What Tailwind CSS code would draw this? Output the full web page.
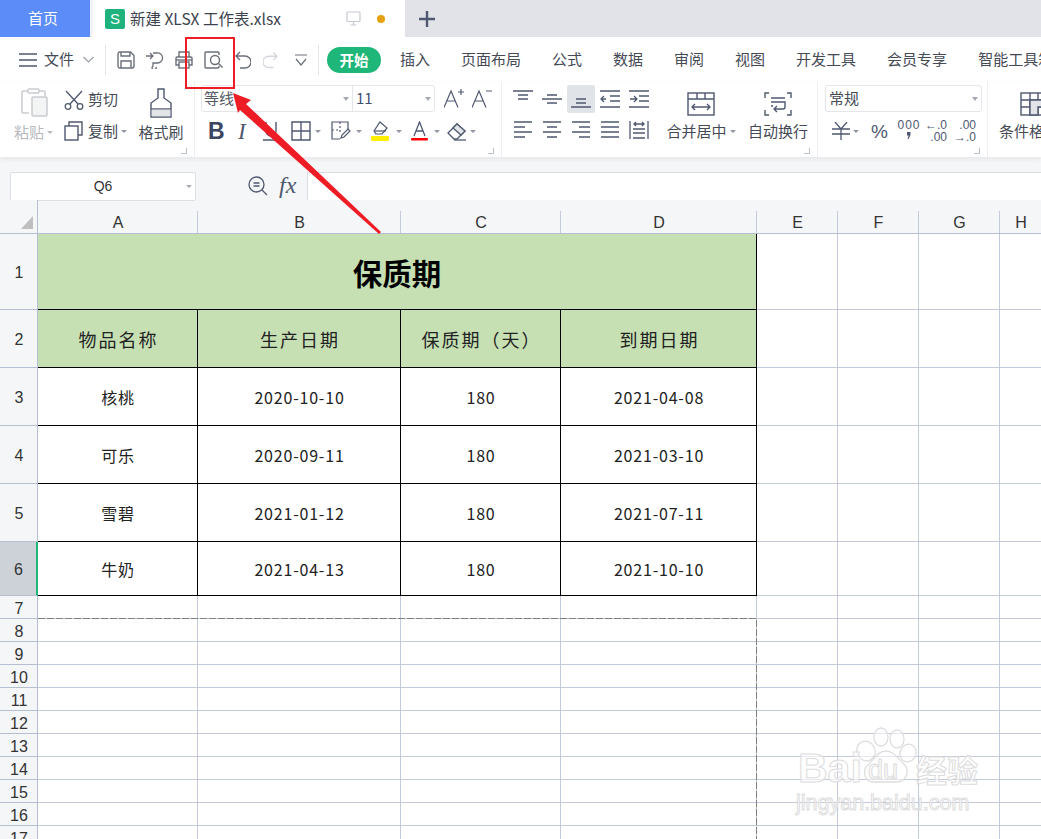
<!DOCTYPE html>
<html lang="zh-CN">
<head>
  <meta charset="UTF-8">
  <title>新建 XLSX 工作表.xlsx</title>
  <script src="https://cdn.jsdelivr.net/npm/@tailwindcss/browser@4"></script>
</head>
<body class="relative w-[1041px] h-[839px] overflow-hidden bg-white font-['Noto_Sans_CJK_SC','Liberation_Sans',sans-serif] text-[#454a55]">

  <!-- tabs -->
  <div class="flex h-[37px] bg-[#e1e3e8]">
    <div class="w-[90px] flex items-center justify-center bg-[#5b8cf8] text-white text-[15px] pr-[4px]">首页</div>
    <div class="w-[3px] bg-[#f1f3f6]"></div>
    <div class="w-[312px] flex items-center bg-white pl-[12px]">
      <div class="w-[20px] h-[20px] rounded-[2px] bg-[#20b27c] text-white text-[15px] leading-[20px] text-center font-['Liberation_Sans']">S</div>
      <span class="ml-[5px] w-[216px] text-[15.500px] text-[#3d424d] whitespace-nowrap">新建 XLSX 工作表.xlsx</span>
      <svg class="w-[15px] h-[15px]" viewBox="0 0 15 15" fill="none" stroke="#c5c9d3" stroke-width="1.2"><rect x="1" y="1" width="13" height="9.5" rx="1"/><path d="M7.5 10.5v3M4.5 14h6"/></svg>
      <div class="ml-[16px] w-[8px] h-[8px] rounded-full bg-[#e8a013]"></div>
    </div>
    <svg class="ml-[14px] mt-[11px] w-[16px] h-[16px]" viewBox="0 0 16 16" stroke="#4f5870" stroke-width="2.4"><path d="M8 0v16M0 8h16"/></svg>
  </div>

  <!-- quick access + menu -->
  <div class="flex items-center h-[45px] pl-[19px] text-[15px] whitespace-nowrap [&>*]:shrink-0">
    <svg class="w-[18px] h-[14px]" viewBox="0 0 18 14" stroke="#4f5870" stroke-width="1.4"><path d="M0 1h18M0 7h18M0 13h18"/></svg>
    <span class="ml-[7px] w-[31px]">文件</span>
    <svg class="ml-[8px] w-[11px] h-[7px]" viewBox="0 0 11 7" fill="none" stroke="#9aa0ad" stroke-width="1.2"><path d="M.5 1l5 5 5-5"/></svg>
    <div class="ml-[11px] w-px h-[30px] bg-[#e2e4e9]"></div>
    <svg class="ml-[11px] w-[18px] h-[18px]" viewBox="0 0 18 18" fill="none" stroke="#6a6f7a" stroke-width="1.4"><path d="M2.5 1h11l3.500 3.500v10.500a2 2 0 0 1-2 2h-12a2 2 0 0 1-2-2v-12a2 2 0 0 1 1.500-2z"/><path d="M4 1v4h9V1M4 17v-7h10v7"/></svg>
    <svg class="ml-[11px] w-[18px] h-[18px]" viewBox="0 0 18 18" fill="none" stroke="#6a6f7a" stroke-width="1.300"><path d="M0 5h7M4 2l3 3-3 3M7 2h4a5 5 0 0 1 1 10H7v3a2 2 0 1 0 3 1"/></svg>
    <svg class="ml-[11px] w-[18px] h-[18px]" viewBox="0 0 18 18" fill="none" stroke="#6a6f7a" stroke-width="1.400"><path d="M4 6V1h10v5M4 14H1V7a1 1 0 0 1 1-1h14a1 1 0 0 1 1 1v7h-3"/><rect x="4" y="11" width="10" height="6"/><path d="M1 9h16"/></svg>
    <svg class="ml-[11px] w-[19px] h-[18px]" viewBox="0 0 19 18" fill="none" stroke="#6a6f7a" stroke-width="1.400"><path d="M15 4V2a1 1 0 0 0-1-1H2a1 1 0 0 0-1 1v14a1 1 0 0 0 1 1h12a1 1 0 0 0 1-1v-1"/><circle cx="11" cy="9" r="4.500"/><path d="M14.500 12.500l4 4"/></svg>
    <svg class="ml-[12px] w-[16px] h-[18px]" viewBox="0 0 16 18" fill="none" stroke="#6a6f7a" stroke-width="1.400"><path d="M5 1L1 5l4 4M1 5h9a5 5 0 0 1 0 12H5"/></svg>
    <svg class="ml-[12px] w-[15px] h-[18px]" viewBox="0 0 16 18" fill="none" stroke="#d3d6dc" stroke-width="1.400"><path d="M11 1l4 4-4 4M15 5H6a5 5 0 0 0 0 12h5"/></svg>
    <svg class="ml-[17px] w-[12px] h-[12px]" viewBox="0 0 12 12" fill="none" stroke="#6a6f7a" stroke-width="1.200"><path d="M0 1h12M1 5l5 6 5-6"/></svg>
    <div class="ml-[11px] w-px h-[30px] bg-[#e2e4e9]"></div>
    <div class="ml-[8px] w-[54px] h-[26px] rounded-full bg-[#1fb67a] text-white text-[14.500px] font-bold leading-[26px] text-center">开始</div>
    <div class="ml-[19px] flex gap-[31px] text-[#454a55]">
      <span>插入</span><span>页面布局</span><span>公式</span><span>数据</span><span>审阅</span><span>视图</span><span>开发工具</span><span>会员专享</span><span>智能工具箱</span>
    </div>
  </div>

  <!-- ribbon -->
  <div class="relative z-10 flex h-[75px] bg-white shadow-[0_2px_5px_rgba(0,0,0,0.07)] text-[15px] whitespace-nowrap overflow-hidden">

    <!-- clipboard -->
    <div class="relative flex shrink-0 w-[195px] pl-[14px] border-r border-[#eceef1] my-0">
      <div class="w-[50px] pt-[6px] flex flex-col items-start">
        <svg class="ml-[7px] w-[27px] h-[29px]" viewBox="0 0 27 29" fill="none" stroke="#c9cbcf" stroke-width="1.500"><path d="M7 3H2a1 1 0 0 0-1 1v20a1 1 0 0 0 1 1h6M18 3h5a1 1 0 0 1 1 1v4"/><rect x="7" y="1" width="11" height="4" rx="1"/><rect x="11" y="9" width="15" height="19" rx="1" fill="#f3f4f4"/></svg>
        <div class="mt-[3px] h-[24px] flex items-center text-[#b7b9bd]">粘贴<span class="ml-[3px] border-x-[3px] border-t-[3px] border-x-transparent border-t-[#b7b9bd]"></span></div>
      </div>
      <div class="w-[74px] flex flex-col text-[#454a55]">
        <div class="h-[29px] mt-[3px] flex items-center">
          <svg class="w-[20px] h-[20px]" viewBox="0 0 20 20" fill="none" stroke="#4f5870" stroke-width="1.300"><path d="M2 1l12 13M18 1L6 14"/><circle cx="4" cy="16.500" r="2.800"/><circle cx="16" cy="16.500" r="2.800"/></svg>
          <span class="ml-[4px]">剪切</span>
        </div>
        <div class="h-[34px] flex items-center">
          <svg class="w-[19px] h-[20px]" viewBox="0 0 19 20" fill="none" stroke="#4f5870" stroke-width="1.400"><path d="M5 5V1h13v13h-4"/><rect x="1" y="5" width="13" height="14"/></svg>
          <span class="ml-[5px]">复制</span>
          <span class="ml-[3px] border-x-[3px] border-t-[3px] border-x-transparent border-t-[#8f95a2]"></span>
        </div>
      </div>
      <div class="w-[46px] pt-[6px] flex flex-col items-center">
        <svg class="w-[24px] h-[30px]" viewBox="0 0 24 30" fill="none" stroke="#4f5870" stroke-width="1.400"><path d="M9 1h6v9l7 5v14H2V15l7-5z"/><path d="M2 21h20"/><path d="M2.700 21.700h18.600v6.600H2.700z" fill="#e2e4e8" stroke="none"/></svg>
        <div class="mt-[2px] h-[24px] leading-[24px]">格式刷</div>
      </div>
      <svg class="absolute right-[7px] bottom-[3px] w-[6px] h-[6px]" viewBox="0 0 6 6" fill="none" stroke="#b9bec8"><path d="M0 5.500h5.500V0"/></svg>
    </div>

    <!-- font -->
    <div class="relative shrink-0 w-[307px] pl-[6px] border-r border-[#eceef1]">
      <div class="flex items-start mt-[3px] h-[29px]">
        <div class="flex w-[234px] h-[27px] border border-[#e4e6ea] rounded-[3px]">
          <div class="w-[151px] flex items-center justify-between pl-[2px] pr-[3px] border-r border-[#e4e6ea] text-[#555a66]">等线<span class="border-x-[3px] border-t-[4px] border-x-transparent border-t-[#a3a8b3]"></span></div>
          <div class="flex-1 flex items-center justify-between pl-[3px] pr-[3px] text-[15px] text-[#3f5170]">11<span class="border-x-[3px] border-t-[4px] border-x-transparent border-t-[#a3a8b3]"></span></div>
        </div>
        <svg class="ml-[9px] mt-[3px] w-[20px] h-[20px]" viewBox="0 0 20 20" fill="none" stroke="#4f5870" stroke-width="1.200"><path d="M0 19.500L7 3l7 16.500M3 13h8M14 4h6M17 1v6"/></svg>
        <svg class="ml-[8px] mt-[3px] w-[20px] h-[20px]" viewBox="0 0 20 20" fill="none" stroke="#4f5870" stroke-width="1.200"><path d="M0 19.500L7 3l7 16.500M3 13h8M14 3h6"/></svg>
      </div>
      <div class="flex items-center h-[34px] [&>*]:shrink-0">
        <span class="ml-[7px] w-[16px] text-[23px] font-bold font-['Liberation_Sans'] text-[#3b4660] leading-none">B</span>
        <span class="ml-[14px] w-[10px] text-[23px] italic font-['Liberation_Serif'] text-[#4f5870] leading-none">I</span>
        <svg class="ml-[14px] w-[18px] h-[20px]" viewBox="0 0 18 20" fill="none" stroke="#4f5870" stroke-width="1.400"><path d="M4 1v9a5 5 0 0 0 10 0V1M1 19h16"/></svg>
        <svg class="ml-[11px] w-[20px] h-[20px]" viewBox="0 0 20 20" fill="none" stroke="#4f5870" stroke-width="1.400"><path d="M1 1h18v18H1zM10 1v18M1 10h18"/></svg>
        <span class="ml-[4px] border-x-[3px] border-t-[3px] border-x-transparent border-t-[#8f95a2]"></span>
        <svg class="ml-[10px] w-[20px] h-[20px]" viewBox="0 0 20 20" fill="none" stroke="#4f5870" stroke-width="1.200"><path d="M9 18H1V1h16v7" /><path d="M9 1v12M1 9h8" stroke-dasharray="2 2"/><path d="M10 17l1-3 6-6 2 2-6 6z"/></svg>
        <span class="ml-[5px] border-x-[3px] border-t-[3px] border-x-transparent border-t-[#8f95a2]"></span>
        <svg class="ml-[9px] w-[19px] h-[20px]" viewBox="0 0 19 20" fill="none" stroke="#4f5870" stroke-width="1.200"><path d="M9 1l7 6-5 6H5L3 10z"/><path d="M3 10h12" /><rect x="0" y="15" width="18" height="5" rx="1" fill="#ffee00" stroke="none"/></svg>
        <span class="ml-[6px] border-x-[3px] border-t-[3px] border-x-transparent border-t-[#8f95a2]"></span>
        <svg class="ml-[9px] w-[17px] h-[20px]" viewBox="0 0 17 20" fill="none" stroke="#4f5870" stroke-width="1.300"><path d="M3 15L8.500 1 14 15M5 10h7"/><rect x="0" y="17" width="17" height="2.500" rx="1" fill="#f00" stroke="none"/></svg>
        <span class="ml-[6px] border-x-[3px] border-t-[3px] border-x-transparent border-t-[#8f95a2]"></span>
        <svg class="ml-[7px] w-[20px] h-[19px]" viewBox="0 0 20 19" fill="none" stroke="#4f5870" stroke-width="1.300"><path d="M1 11l9-9 8 7-8 8H7z"/><path d="M10 2l8 7-4 4-8-7z" fill="#e2e4e8"/><path d="M7 18h12"/></svg>
        <span class="ml-[3px] border-x-[3px] border-t-[3px] border-x-transparent border-t-[#8f95a2]"></span>
      </div>
      <svg class="absolute right-[7px] bottom-[3px] w-[6px] h-[6px]" viewBox="0 0 6 6" fill="none" stroke="#b9bec8"><path d="M0 5.500h5.500V0"/></svg>
    </div>

    <!-- alignment -->
    <div class="relative flex shrink-0 w-[316px] pl-[6px] border-r border-[#eceef1]">
      <div class="w-[145px] mt-[3px] grid grid-cols-[repeat(5,29px)] grid-rows-[28px_34px] items-center justify-items-center">
        <svg class="w-[20px] h-[18px]" viewBox="0 0 20 18" stroke="#4f5870" stroke-width="1.400"><path d="M0 1h20M5 5h10M5 9h10"/></svg>
        <svg class="w-[20px] h-[18px]" viewBox="0 0 20 18" stroke="#4f5870" stroke-width="1.400"><path d="M5 5h10M0 9h20M5 13h10"/></svg>
        <div class="w-[28px] h-[28px] bg-[#e0e3e8] rounded-[2px] flex items-center justify-center"><svg class="w-[20px] h-[18px]" viewBox="0 0 20 18" stroke="#4f5870" stroke-width="1.400"><path d="M5 9h10M5 13h10M0 17h20"/></svg></div>
        <svg class="w-[20px] h-[18px]" viewBox="0 0 20 18" fill="none" stroke="#4f5870" stroke-width="1.300"><path d="M0 1h20M10 6h10M10 11h10M0 17h20M6 9H1M4 6L1 9l3 3"/></svg>
        <svg class="w-[20px] h-[18px]" viewBox="0 0 20 18" fill="none" stroke="#4f5870" stroke-width="1.300"><path d="M0 1h20M10 6h10M10 11h10M0 17h20M1 9h6M5 6l3 3-3 3"/></svg>
        <svg class="w-[18px] h-[18px]" viewBox="0 0 18 18" stroke="#4f5870" stroke-width="1.400"><path d="M0 1h18M0 6h11M0 11h18M0 16h11"/></svg>
        <svg class="w-[18px] h-[18px]" viewBox="0 0 18 18" stroke="#4f5870" stroke-width="1.400"><path d="M0 1h18M4 6h10M0 11h18M4 16h10"/></svg>
        <svg class="w-[18px] h-[18px]" viewBox="0 0 18 18" stroke="#4f5870" stroke-width="1.400"><path d="M0 1h18M7 6h11M0 11h18M7 16h11"/></svg>
        <svg class="w-[18px] h-[18px]" viewBox="0 0 18 18" stroke="#4f5870" stroke-width="1.400"><path d="M0 1h18M0 6h18M0 11h18M0 16h18"/></svg>
        <svg class="w-[20px] h-[18px]" viewBox="0 0 20 18" fill="none" stroke="#4f5870" stroke-width="1.300"><path d="M1 0v18M19 0v18M4 8h12M4 17h12M4 12h12M5 3h10M7 1L5 3l2 2M13 1l2 2-2 2"/></svg>
      </div>
      <div class="ml-[12px] w-[72px] pt-[10px] flex flex-col items-center">
        <svg class="w-[28px] h-[24px]" viewBox="0 0 28 24" fill="none" stroke="#4f5870" stroke-width="1.400"><rect x="1" y="1" width="26" height="22"/><path d="M1 7h26M10 1v6M18 1v6M5 15h18M8 12l-3 3 3 3M20 12l3 3-3 3"/></svg>
        <div class="mt-[3px] flex items-center h-[24px]">合并居中<span class="ml-[3px] border-x-[3px] border-t-[3px] border-x-transparent border-t-[#8f95a2]"></span></div>
      </div>
      <div class="ml-[11px] w-[60px] pt-[10px] flex flex-col items-center">
        <svg class="w-[28px] h-[24px]" viewBox="0 0 28 24" fill="none" stroke="#4f5870" stroke-width="1.400"><path d="M5 1H1v5M23 1h4v5M5 23H1v-5M23 23h4v-5M7 6h14M7 10h14v5a2 2 0 0 1-2 2h-8M13 14l-3 3 3 3M7 14h2"/></svg>
        <div class="mt-[3px] h-[24px] leading-[24px]">自动换行</div>
      </div>
      <svg class="absolute right-[7px] bottom-[3px] w-[6px] h-[6px]" viewBox="0 0 6 6" fill="none" stroke="#b9bec8"><path d="M0 5.500h5.500V0"/></svg>
    </div>

    <!-- number -->
    <div class="relative shrink-0 w-[170px] pl-[7px] border-r border-[#eceef1]">
      <div class="mt-[3px] h-[29px]">
        <div class="w-[157px] h-[27px] flex items-center justify-between pl-[3px] pr-[3px] border border-[#e4e6ea] rounded-[3px] text-[#454a55]">常规<span class="border-x-[3px] border-t-[4px] border-x-transparent border-t-[#a3a8b3]"></span></div>
      </div>
      <div class="flex items-center h-[34px] text-[#4f5870] [&>*]:shrink-0">
        <svg class="ml-[6px] w-[20px] h-[18px]" viewBox="0 0 20 18" fill="none" stroke="#4f5870" stroke-width="1.300"><path d="M4 0l6 7 6-7M10 7v11M1 7h18M1 12h18"/></svg>
        <span class="ml-[2px] border-x-[3px] border-t-[3px] border-x-transparent border-t-[#8f95a2]"></span>
        <span class="ml-[12px] w-[17px] text-[19px] font-['Liberation_Sans'] leading-none">%</span>
        <span class="ml-[10px] w-[22px] h-[24px] flex flex-col items-center text-[12px] font-['Liberation_Sans'] leading-[12px] tracking-[1px]"><span>000</span><svg class="mt-[1px] w-[4px] h-[7px]" viewBox="0 0 4 7" fill="#4f5870"><path d="M0 0h3.500v3L1.500 7H.500l1-3.500H0z"/></svg></span>
        <span class="ml-[5px] w-[22px] flex flex-col items-end text-[12px] font-['Liberation_Sans'] leading-[12px]"><span>←.0</span><span>.00</span></span>
        <span class="ml-[7px] w-[22px] flex flex-col items-end text-[12px] font-['Liberation_Sans'] leading-[12px]"><span>.00</span><span>→.0</span></span>
      </div>
      <svg class="absolute right-[7px] bottom-[3px] w-[6px] h-[6px]" viewBox="0 0 6 6" fill="none" stroke="#b9bec8"><path d="M0 5.500h5.500V0"/></svg>
    </div>

    <!-- styles -->
    <div class="w-[53px] pl-[11px] pt-[10px] flex flex-col items-start">
      <svg class="ml-[21px] w-[28px] h-[24px] shrink-0" viewBox="0 0 28 24" fill="none" stroke="#4f5870" stroke-width="1.400"><rect x="1" y="1" width="26" height="22"/><path d="M1 8h26M1 15h26M10 1v22M18 1v22"/><path d="M10 8h17v7H18v8h-8z" fill="#e2e4e8"/></svg>
      <div class="mt-[3px] h-[24px] leading-[24px]">条件格式</div>
    </div>
  </div>

  <!-- formula bar -->
  <div class="flex h-[43px] bg-[#f5f6f8] pt-[15px] pl-[10px]">
    <div class="relative w-[186px] h-[29px] bg-white border border-[#dcdfe5] rounded-[2px] text-center text-[14px] leading-[27px] text-[#333] font-['Liberation_Sans']">Q6
      <span class="absolute right-[3px] top-[12px] border-x-[3px] border-t-[3px] border-x-transparent border-t-[#a3a8b3]"></span>
    </div>
    <svg class="ml-[52px] mt-[4px] w-[20px] h-[20px]" viewBox="0 0 20 20" fill="none" stroke="#4f5870" stroke-width="1.300"><circle cx="8.500" cy="8.500" r="7.500"/><path d="M14 14l5 5M5.500 7h6M5.500 10h6"/></svg>
    <span class="ml-[11px] mt-[-5px] w-[20px] text-[24px] italic font-['Liberation_Serif'] text-[#4f5870]">fx</span>
    <div class="ml-[8px] flex-1 h-[29px] bg-white border-y border-l border-[#d9dce3]"></div>
  </div>

  <!-- sheet, built below -->
  <div id="sheet" class="grid grid-cols-[38px_160px_203px_160px_196px_81px_81px_81px_42px] grid-rows-[34px_76px_58px_58px_58px_58px_54px_repeat(11,23px)] bg-white text-[#222]"></div>

  <!-- watermark -->
  <div class="absolute left-[796px] top-[727px] w-[192px] h-[92px] select-none">
    <svg class="absolute left-[60px] top-0 w-[62px] h-[60px]" viewBox="0 0 62 60" fill="#fff" fill-opacity="0.55" stroke="#dedede" stroke-width="1.300"><ellipse cx="10" cy="24" rx="9" ry="10" transform="rotate(-25 10 24)"/><ellipse cx="25" cy="10" rx="7" ry="9"/><ellipse cx="41" cy="12" rx="7" ry="9"/><ellipse cx="52" cy="26" rx="8" ry="9" transform="rotate(25 52 26)"/><path d="M30 24c8 0 12 8 18 13 6 6 3 18-8 18H18c-10 0-12-12-6-17 6-5 9-14 18-14z"/></svg>
    <span class="absolute left-[2px] top-[16px] text-[41px] font-bold leading-[50px] font-['Liberation_Sans'] text-white/60 [-webkit-text-stroke:1px_#dcdcdc]">Bai</span>
    <span class="absolute left-[72px] top-[26px] text-[27px] leading-[34px] font-['Liberation_Sans'] text-white/60 [-webkit-text-stroke:1px_#dcdcdc]">du</span>
    <span class="absolute left-[120px] top-[22px] text-[31px] font-bold leading-[40px] text-white/60 [-webkit-text-stroke:1px_#dcdcdc]">经验</span>
    <span class="absolute left-0 top-[62px] text-[21.500px] leading-[28px] font-['Liberation_Sans'] text-white/60 [-webkit-text-stroke:1px_#dddddd] whitespace-nowrap">jingyan.baidu.com</span>
  </div>

  <!-- annotation and print area -->
  <div class="absolute z-20 left-[185px] top-[37px] w-[50px] h-[52px] border-2 border-[#ee1c25]"></div>
  <svg class="absolute left-0 top-0 z-20 pointer-events-none" width="1041" height="839" viewBox="0 0 1041 839">
    <path d="M38 618.500H756.500V839" fill="none" stroke="#808080" stroke-dasharray="7 2"/>
    <polygon fill="#ee1c25" points="233,93 251,100 246,104 381,232 379,234 240,110 238,113"/>
  </svg>

  <script>
    const rowHead = 'flex items-center justify-center pt-[3px] pl-[1px] text-[16px] text-[#333] font-[\'Liberation_Sans\'] bg-[#f5f6f8] border-r border-b border-[#b6bed1]';
    const grid = 'border-r border-b border-[#c3cadb]';
    const inked = 'flex items-center justify-center border-r border-b border-black';
    const data = [
      ['物品名称', '生产日期', '保质期（天）', '到期日期'],
      ['核桃', '2020-10-10', '180', '2021-04-08'],
      ['可乐', '2020-09-11', '180', '2021-03-10'],
      ['雪碧', '2021-01-12', '180', '2021-07-11'],
      ['牛奶', '2021-04-13', '180', '2021-10-10']
    ];
    const sheet = document.getElementById('sheet');
    let html = '<div class="relative bg-[#f5f6f8] border-r border-b border-[#b6bed1]"><svg class="absolute left-[21px] top-[16px] w-[12px] h-[13px]" viewBox="0 0 12 13" fill="#bfbfbf"><path d="M12 0v13H0z"/></svg></div>';
    'ABCDEFGH'.split('').forEach(c => {
      html += `<div class="pt-[11px] bg-[#f5f6f8] border-b border-[#b6bed1]"><div class="h-[22px] flex items-end justify-center pl-[1px] pb-[1px] text-[16px] leading-[22px] text-[#333] font-['Liberation_Sans'] border-r border-[#c3cadb]"><span class="translate-y-[2px]">${c}</span></div></div>`;
    });
    // row 1
    html += `<div class="${rowHead}">1</div>`;
    html += `<div class="col-span-4 pt-[1px] bg-[#c6e0b4] text-black text-[29.500px] font-bold ${inked}">保质期</div>`;
    for (let i = 0; i < 4; i++) html += `<div class="${grid}"></div>`;
    // rows 2-6
    data.forEach((row, r) => {
      const active = r === 4;
      html += active
        ? `<div class="flex items-center justify-center pt-[3px] pl-[1px] text-[16px] text-[#333] font-['Liberation_Sans'] bg-[#cdd1d8] border-r-2 border-r-[#1fb67a] border-b border-b-[#b6bed1]">6</div>`
        : `<div class="${rowHead}">${r + 2}</div>`;
      row.forEach(t => {
        html += r === 0
          ? `<div class="bg-[#c6e0b4] pl-[2px] pt-[1px] text-[18px] tracking-[2px] ${inked}">${t}</div>`
          : `<div class="pl-[1px] text-[16px] tracking-[0.800px] ${inked}">${t}</div>`;
      });
      for (let i = 0; i < 4; i++) html += `<div class="${grid}"></div>`;
    });
    // empty rows
    for (let r = 7; r <= 17; r++) {
      html += `<div class="${rowHead}">${r}</div>`;
      for (let i = 0; i < 8; i++) html += `<div class="${grid}"></div>`;
    }
    sheet.innerHTML = html;
  </script>
</body>
</html>
